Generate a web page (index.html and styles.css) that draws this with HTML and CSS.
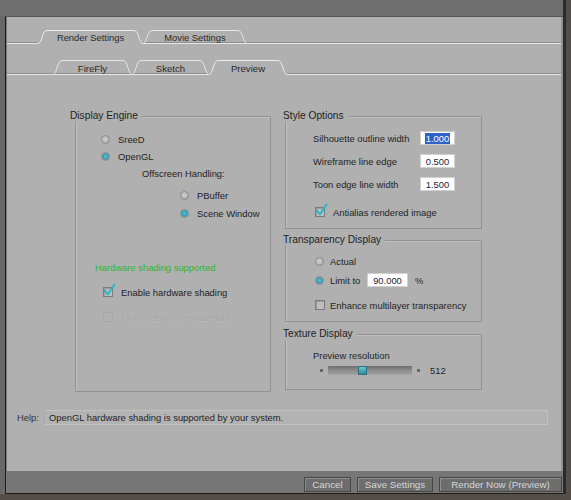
FILE: index.html
```html
<!DOCTYPE html>
<html>
<head>
<meta charset="utf-8">
<title>Render Settings</title>
<link rel="stylesheet" href="styles.css">
</head>
<body>
<div class="win">
  <div class="topband"></div>
  <div class="frame">
    <div class="panel">
      <div class="tabrow outer">
        <div class="tab sel w105">
          <svg width="105" height="14"><path d="M0 13.5C4 13.5 4 0.5 9 0.5H96C101 0.5 101 13.5 105 13.5" fill="none" stroke="#ececec"/></svg>
          <span class="tl">Render Settings</span>
        </div>
        <div class="tab w104">
          <svg width="104" height="14"><path d="M0 13.5C4 13.5 4 0.5 9 0.5H95C100 0.5 100 13.5 104 13.5" fill="none" stroke="#e6e6e6"/></svg>
          <span class="tl">Movie Settings</span>
        </div>
      </div>
      <div class="tabrow inner">
        <div class="tab w79">
          <svg width="79" height="15"><path d="M0 14.5C4 14.5 4 0.5 9 0.5H70C75 0.5 75 14.5 79 14.5" fill="none" stroke="#e6e6e6"/></svg>
          <span class="tl">FireFly</span>
        </div>
        <div class="tab w77">
          <svg width="77" height="15"><path d="M0 14.5C4 14.5 4 0.5 9 0.5H68C73 0.5 73 14.5 77 14.5" fill="none" stroke="#e6e6e6"/></svg>
          <span class="tl">Sketch</span>
        </div>
        <div class="tab sel w78">
          <svg width="78" height="15"><path d="M0 14.5C4 14.5 4 0.5 9 0.5H69C74 0.5 74 14.5 78 14.5" fill="none" stroke="#ececec"/></svg>
          <span class="tl">Preview</span>
        </div>
      </div>

      <div class="content">
        <div class="group display">
          <div class="legend">Display Engine</div>
          <div class="row de-sreed"><span class="radio"></span><span>SreeD</span></div>
          <div class="row de-opengl"><span class="radio on"></span><span>OpenGL</span></div>
          <div class="row de-off"><span>Offscreen Handling:</span></div>
          <div class="row de-pbuf"><span class="radio"></span><span>PBuffer</span></div>
          <div class="row de-scene"><span class="radio on"></span><span>Scene Window</span></div>
          <div class="row de-hw"><span>Hardware shading supported</span></div>
          <div class="row de-enable">
            <span class="check"><svg class="tick-mark" width="13" height="14" viewBox="0 0 13 14"><path d="M2 7.5L4.8 11.5L11.5 1.5" fill="none" stroke="#22b9cc" stroke-width="1.9" stroke-linecap="round" stroke-linejoin="round"/></svg></span>
            <span>Enable hardware shading</span>
          </div>
          <div class="row de-opt disabled"><span class="check off"></span><span>Optimize simple materials</span></div>
        </div>

        <div class="col">
          <div class="group style">
            <div class="legend">Style Options</div>
            <div class="row so-row first"><span class="so-label">Silhouette outline width</span><span class="num"><span class="selected">1.000</span></span></div>
            <div class="row so-row"><span class="so-label">Wireframe line edge</span><span class="num">0.500</span></div>
            <div class="row so-row"><span class="so-label">Toon edge line width</span><span class="num">1.500</span></div>
            <div class="row so-aa">
              <span class="check"><svg class="tick-mark" width="13" height="14" viewBox="0 0 13 14"><path d="M2 7.5L4.8 11.5L11.5 1.5" fill="none" stroke="#22b9cc" stroke-width="1.9" stroke-linecap="round" stroke-linejoin="round"/></svg></span>
              <span>Antialias rendered image</span>
            </div>
          </div>

          <div class="group transp">
            <div class="legend">Transparency Display</div>
            <div class="row tr-actual"><span class="radio"></span><span>Actual</span></div>
            <div class="row tr-limit"><span class="radio on"></span><span class="limit-label">Limit to</span><span class="num wide">90.000</span><span class="pct">%</span></div>
            <div class="row tr-enh"><span class="check plain"></span><span>Enhance multilayer transparency</span></div>
          </div>

          <div class="group texture">
            <div class="legend">Texture Display</div>
            <div class="row tx-label"><span>Preview resolution</span></div>
            <div class="row slider-row">
              <span class="end"></span>
              <span class="track"><span class="thumb"></span></span>
              <span class="end"></span>
              <span class="val">512</span>
            </div>
          </div>
        </div>
      </div>

      <div class="help">
        <span class="help-label">Help:</span>
        <span class="help-field">OpenGL hardware shading is supported by your system.</span>
      </div>
    </div>
    <div class="bbar">
      <span class="btn b-cancel">Cancel</span>
      <span class="btn b-save">Save Settings</span>
      <span class="btn b-render">Render Now (Preview)</span>
    </div>
  </div>
</div>
</body>
</html>
```

FILE: styles.css
```css
html, body {
  margin: 0;
  padding: 0;
}
body {
  background: #554e48;
  width: 571px;
  height: 500px;
  overflow: hidden;
  font-family: "Liberation Sans", Arial, sans-serif;
  font-size: 9.4px;
  color: #1f1f1f;
}

.win {
  width: 563px;
  height: 494px;
  background: #686868;
  border-right: 3px solid #2d2a27;
  display: flex;
  flex-direction: column;
}
.topband {
  height: 16px;
  flex: none;
  background: #6e6e6e;
}
.frame {
  flex: 1;
  margin-left: 5px;
  border-left: 1px solid #1b1b1b;
  border-top: 1px solid #585858;
  border-bottom: 1px solid #1b1b1b;
  padding-left: 1px;
  background: #7a7a7a;
  display: flex;
  flex-direction: column;
}
.panel {
  flex: none;
  height: 454px;
  box-sizing: border-box;
  background: #b0b0b0;
  border-right: 2px solid #929292;
  padding-top: 13px;
}

/* tabs */
.tabrow {
  display: flex;
  border-bottom: 1px solid #e8e8e8;
  box-shadow: inset 0 -1px 0 #8c8c8c;
}
.tabrow.outer {
  height: 13px;
  padding-left: 31px;
}
.tabrow.inner {
  height: 14px;
  padding-left: 46px;
  margin-top: 16px;
}
.tab {
  position: relative;
  flex: none;
  text-align: center;
  color: #2a2a2a;
}
.tab svg {
  position: absolute;
  left: 0;
  top: 0;
}
.tab .tl {
  position: relative;
  display: block;
}
.outer .tab { height: 13px; }
.outer .tab .tl { line-height: 16px; }
.inner .tab { height: 14px; font-size: 9.6px; }
.inner .tab .tl { line-height: 18px; }
.outer .tab.sel { height: 14px; background: #b0b0b0; }
.inner .tab.sel { height: 15px; background: #b0b0b0; }
.w105 { width: 105px; }
.w104 { width: 104px; }
.w79 { width: 79px; }
.w77 { width: 77px; }
.w78 { width: 78px; }

/* content */
.content {
  display: flex;
  align-items: flex-start;
  gap: 14px;
  padding: 41px 0 0 68px;
}
.group {
  box-sizing: border-box;
  border: 1px solid #929292;
  box-shadow: inset 1px 1px 0 #c0c0c0;
}
.legend {
  width: max-content;
  height: 12px;
  line-height: 12px;
  margin: -7px 0 0 -6px;
  padding-right: 4px;
  background: #b0b0b0;
  font-size: 10.2px;
  color: #222;
}
.col .legend { margin-left: -3px; }

.display { width: 196px; height: 276px; }
.col {
  width: 197px;
  display: flex;
  flex-direction: column;
}
.style { height: 113px; }
.transp { height: 82px; margin-top: 11px; }
.texture { height: 56px; margin-top: 12px; }

.row {
  display: flex;
  align-items: center;
  height: 16px;
  white-space: nowrap;
}

/* controls */
.radio {
  flex: none;
  width: 9px;
  height: 9px;
  box-sizing: border-box;
  border-radius: 50%;
  border: 1px solid #8e8e8e;
  background: radial-gradient(circle at 45% 45%, #cfcfcf 0, #b9b9b9 3px, #a2a2a2 4px);
  margin-right: 8px;
}
.radio.on {
  border-color: #7f8f94;
  background: radial-gradient(circle at 50% 50%, #54d0ea 0, #2aa5c4 2px, #5f97a6 3px, #9aa3a6 4px);
}
.check {
  flex: none;
  position: relative;
  width: 10px;
  height: 10px;
  box-sizing: border-box;
  border: 1px solid #7c7c7c;
  background: #bdbdbd;
  box-shadow: inset 1px 1px 0 #9c9c9c;
  margin-right: 8px;
}
.check .tick-mark {
  position: absolute;
  left: -1px;
  top: -5px;
}
.check.off {
  border-color: #a6a6a6;
  background: #b0b0b0;
  box-shadow: none;
}
.disabled { color: #a7a7a7; text-shadow: 1px 1px 0 #bababa; }

/* display engine rows */
.de-sreed { margin-top: 9px; padding-left: 25px; }
.de-opengl { margin-top: 1px; padding-left: 25px; }
.de-off { margin-top: 1px; padding-left: 66px; }
.de-pbuf { margin-top: 6px; padding-left: 104px; }
.de-scene { margin-top: 2px; padding-left: 104px; }
.de-hw { margin-top: 38px; padding-left: 19px; color: #2fb52f; }
.de-enable { margin-top: 9px; padding-left: 27px; }
.de-opt { margin-top: 9px; padding-left: 27px; }
.de-opt .check { margin-right: 9px; }

/* style options */
.so-row { margin-top: 7px; padding-left: 27px; }
.so-row.first { margin-top: 8px; }
.so-label { width: 107px; flex: none; }
.num {
  flex: none;
  box-sizing: border-box;
  width: 35px;
  height: 14px;
  background: #ffffff;
  border: 1px solid #d0d0d0;
  display: flex;
  align-items: center;
  justify-content: center;
  color: #1b1b3a;
}
.num .selected {
  background: #3060cc;
  color: #ffffff;
  padding: 0 1px;
  line-height: 11px;
}
.num.wide { width: 41px; }
.so-aa { margin-top: 12px; padding-left: 29px; }

/* transparency */
.tr-actual { margin-top: 7px; padding-left: 29px; }
.tr-limit { margin-top: 3px; padding-left: 29px; }
.tr-actual .radio, .tr-limit .radio { margin-right: 6px; }
.limit-label { width: 37px; flex: none; }
.pct { margin-left: 7px; }
.tr-enh { margin-top: 9px; padding-left: 29px; }
.tr-enh .check { margin-right: 5px; }

/* texture */
.tx-label { margin-top: 8px; padding-left: 27px; height: 14px; }
.slider-row { margin-top: 1px; height: 14px; padding-left: 34px; }
.end {
  flex: none;
  width: 3px;
  height: 3px;
  background: #5d6a6b;
}
.track {
  flex: none;
  display: flex;
  box-sizing: border-box;
  width: 84px;
  height: 9px;
  margin: 0 5px;
  padding-left: 30px;
  background: linear-gradient(#6f6f6f, #8c8c8c 50%, #a4a4a4);
  border-radius: 1px;
}
.thumb {
  width: 9px;
  height: 9px;
  box-sizing: border-box;
  border: 1px solid #2b6f7c;
  background: linear-gradient(#6cc3d2, #2f8c9e);
}
.val { margin-left: 10px; }

/* help */
.help {
  display: flex;
  align-items: center;
  margin-top: 18px;
  padding-left: 10px;
  height: 15px;
}
.help-label { width: 27px; flex: none; color: #333; }
.help-field {
  flex: none;
  width: 504px;
  height: 15px;
  box-sizing: border-box;
  border: 1px solid #c0c0c0;
  border-left-color: #a8a8a8;
  background: #b3b3b3;
  padding-left: 4px;
  display: flex;
  align-items: center;
}

/* bottom bar */
.bbar {
  flex: 1;
  display: flex;
  justify-content: flex-end;
  align-items: flex-start;
  gap: 6px;
  padding: 6px 1px 0 0;
  background: #767676;
}
.btn {
  box-sizing: border-box;
  height: 15px;
  border: 1px solid #464646;
  background: #6d6d6d;
  box-shadow: inset 1px 1px 0 #8e8e8e;
  color: #d6d6d6;
  font-size: 9.8px;
  line-height: 13px;
  text-align: center;
  white-space: nowrap;
}
.b-cancel { width: 47px; }
.b-save { width: 76px; }
.b-render { width: 123px; }
```
